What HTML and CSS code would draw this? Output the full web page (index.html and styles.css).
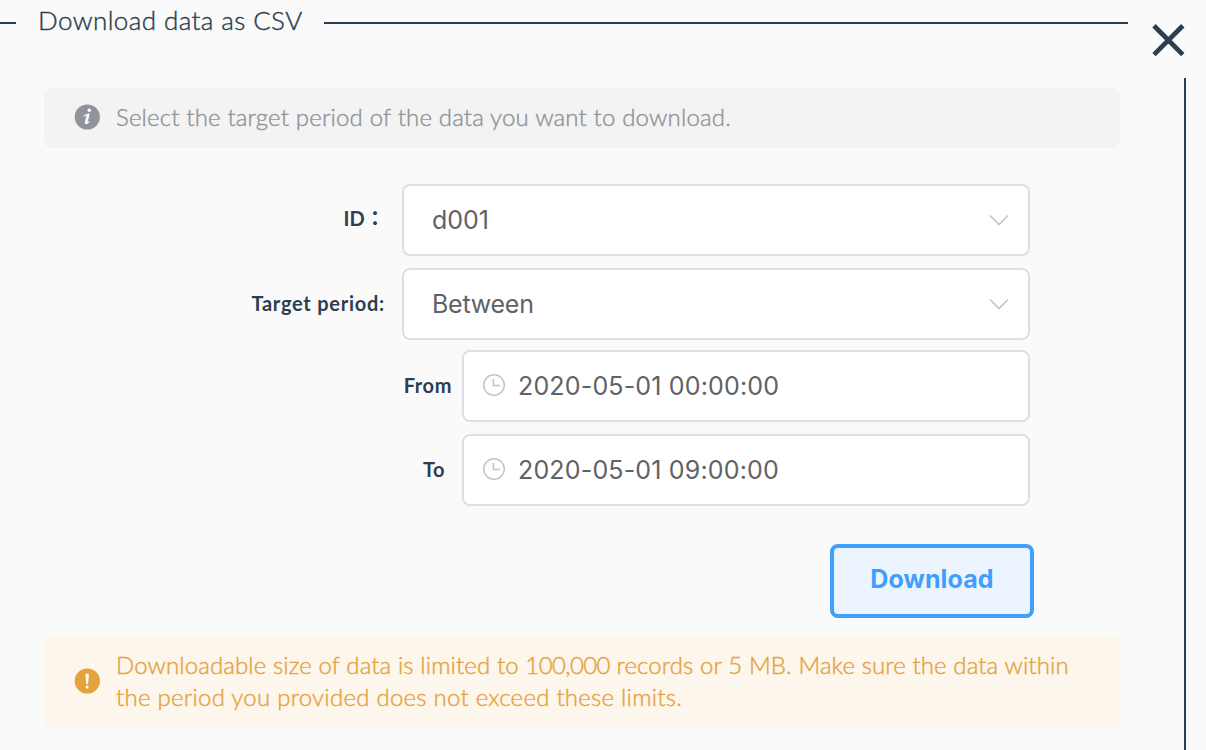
FILE: index.html
```html
<!DOCTYPE html>
<html lang="en">
<head>
<meta charset="utf-8">
<title>Download data as CSV</title>
<link rel="stylesheet" href="styles.css">
</head>
<body>
<main class="dialog">
  <header class="dialog-header">
    <span class="rule rule-start"></span>
    <h1 class="title"><span class="title-text">Download data as CSV</span></h1>
    <span class="rule rule-end"></span>
    <button class="close" aria-label="Close">
      <svg width="34" height="34" viewBox="0 0 34 34"><path d="M3 2.8 31.8 31.6M31.8 2.8 3 31.6" fill="none" stroke="#2c3e50" stroke-width="4.8"/></svg>
    </button>
  </header>
  <section class="dialog-body">
    <div class="alert alert-info">
      <svg class="alert-icon" width="26" height="26" viewBox="0 0 26 26">
        <circle cx="13.3" cy="13" r="12.6" fill="#909399"/>
        <circle cx="15.3" cy="6.3" r="1.8" fill="#fff"/>
        <path d="M9.7 12.4C11.2 11 12.8 10.2 14.8 10.1L12.5 18.6C12.2 19.9 13 19.8 15.4 17.3" fill="none" stroke="#fff" stroke-width="1.2"/>
        <path d="M14.2 10.2 11.8 19.8" fill="none" stroke="#fff" stroke-width="2.6"/>
      </svg>
      <p class="alert-text info-text">Select the target period of the data you want to download.</p>
    </div>
    <form class="form">
      <div class="row">
        <label class="label label-id">ID<span class="wide-colon">：</span></label>
        <div class="field select"><span class="value value-id">d001</span>
          <svg width="20" height="12" viewBox="0 0 20 12"><path d="M1 1.5 10 10.5 19 1.5" fill="none" stroke="#c0c4cc" stroke-width="1.6"/></svg>
        </div>
      </div>
      <div class="row row-period">
        <label class="label label-period">Target period:</label>
        <div class="field select"><span class="value value-period">Between</span>
          <svg width="20" height="12" viewBox="0 0 20 12"><path d="M1 1.5 10 10.5 19 1.5" fill="none" stroke="#c0c4cc" stroke-width="1.6"/></svg>
        </div>
      </div>
      <div class="row row-from">
        <label class="label label-from">From</label>
        <div class="field date">
          <svg width="24" height="24" viewBox="0 0 24 24"><path d="M11.4 6V12.6H18" fill="none" stroke="#c0c4cc" stroke-width="1.5"/><circle cx="12" cy="12" r="10.3" fill="none" stroke="#c0c4cc" stroke-width="1.5"/></svg>
          <span class="value value-date">2020-05-01 00:00:00</span>
        </div>
      </div>
      <div class="row">
        <label class="label label-to">To</label>
        <div class="field date">
          <svg width="24" height="24" viewBox="0 0 24 24"><path d="M11.4 6V12.6H18" fill="none" stroke="#c0c4cc" stroke-width="1.5"/><circle cx="12" cy="12" r="10.3" fill="none" stroke="#c0c4cc" stroke-width="1.5"/></svg>
          <span class="value value-date">2020-05-01 09:00:00</span>
        </div>
      </div>
      <button class="download" type="button"><span>Download</span></button>
    </form>
    <div class="alert alert-warning">
      <svg class="alert-icon" width="26" height="26" viewBox="0 0 26 26">
        <circle cx="13.3" cy="13" r="12.6" fill="#e6a23c"/>
        <path d="M11.4 7.2a1.75 1.75 0 0 1 3.5 0L14.1 15.5a1 1 0 0 1-1.9 0Z" fill="#fff"/>
        <circle cx="13.15" cy="18.9" r="1.5" fill="#fff"/>
      </svg>
      <p class="alert-text"><span class="warn-one">Downloadable size of data is limited to <span class="figure">100,000</span> records or 5 MB. Make sure the data within</span><br><span class="warn-two">the period you provided does not exceed these limits.</span></p>
    </div>
  </section>
</main>
</body>
</html>
```
FILE: styles.css
```css
* { box-sizing: border-box; }
body {
  margin: 0;
  background: #fafafa;
  color: #2c3e50;
  font-family: Lato, "Noto Sans CJK JP", sans-serif;
}
p, h1 { margin: 0; }
svg { display: block; flex: none; }
button { font-family: inherit; padding: 0; }
.dialog { height: 750px; display: flex; flex-direction: column; overflow: hidden; }
.dialog-header { height: 78px; flex: none; display: flex; align-items: flex-start; }
.rule { height: 2px; margin-top: 22px; background: #2c3e50; }
.rule-start { width: 16px; }
.rule-end { flex: 1; }
.title {
  width: 308px;
  padding-left: 22px;
  font-size: 26px;
  font-weight: 300;
  line-height: 40px;
  white-space: nowrap;
  letter-spacing: 0.4px;
  -webkit-text-stroke: 0.4px;
}
.close { width: 78px; padding: 23px 0 0 23px; border: 0; background: none; }
.dialog-body {
  flex: 1;
  margin-right: 20px;
  padding: 10px 64px 0 44px;
  border-right: 2px solid #2c3e50;
}
.alert { display: flex; align-items: center; padding: 0 0 2px 30px; border-radius: 8px; white-space: nowrap; }
.alert-text {
  margin-left: 16px;
  font-size: 24px;
  font-weight: 300;
  line-height: 32px;
  -webkit-text-stroke: 0.4px;
}
.alert-info { height: 60px; background: #f3f3f3; color: #909399; }
.info-text { letter-spacing: 0.17px; }
.alert-warning { height: 92px; margin-top: 18px; background: #fdf6ec; color: #e6a23c; }
.warn-one { letter-spacing: 0.11px; }
.figure { letter-spacing: -0.6px; }
.warn-two { letter-spacing: 0.25px; }
.form { padding: 36px 86px 0 0; display: flex; flex-direction: column; align-items: flex-end; }
.form .row { padding-right: 4px; }
.row { height: 72px; margin-bottom: 12px; display: flex; align-items: center; }
.row-period { margin-bottom: 10px; }
.label { font-size: 20px; font-weight: 700; padding-bottom: 2px; white-space: nowrap; letter-spacing: 0.5px; }
.label-id { display: flex; padding: 0 17px 3px 0; letter-spacing: 0.2px; }
.wide-colon { width: 20px; margin-top: -3px; }
.label-period { padding-right: 17px; letter-spacing: 0.75px; }
.label-from { padding-right: 10px; letter-spacing: 0.6px; }
.label-to { padding-right: 17px; }
.field {
  height: 72px;
  display: flex;
  align-items: center;
  border: 2px solid #dcdfe6;
  border-radius: 8px;
  background: #fff;
  color: #606266;
  font: 25px Inter, sans-serif;
}
.select { width: 628px; justify-content: space-between; padding: 0 19px 0 28px; }
.date { width: 568px; padding-left: 18px; }
.date svg { margin-bottom: 2px; }
.value { line-height: 30px; padding-bottom: 1px; }
.value-period { letter-spacing: -0.25px; }
.value-date { margin-left: 12px; letter-spacing: 0.17px; }
.download {
  width: 204px;
  height: 74px;
  margin-top: 26px;
  padding-bottom: 5px;
  border: 4px solid #409eff;
  border-radius: 8px;
  background: #ecf5ff;
  color: #409eff;
  font: 700 25px Inter, sans-serif;
  letter-spacing: 0.1px;
}
```
